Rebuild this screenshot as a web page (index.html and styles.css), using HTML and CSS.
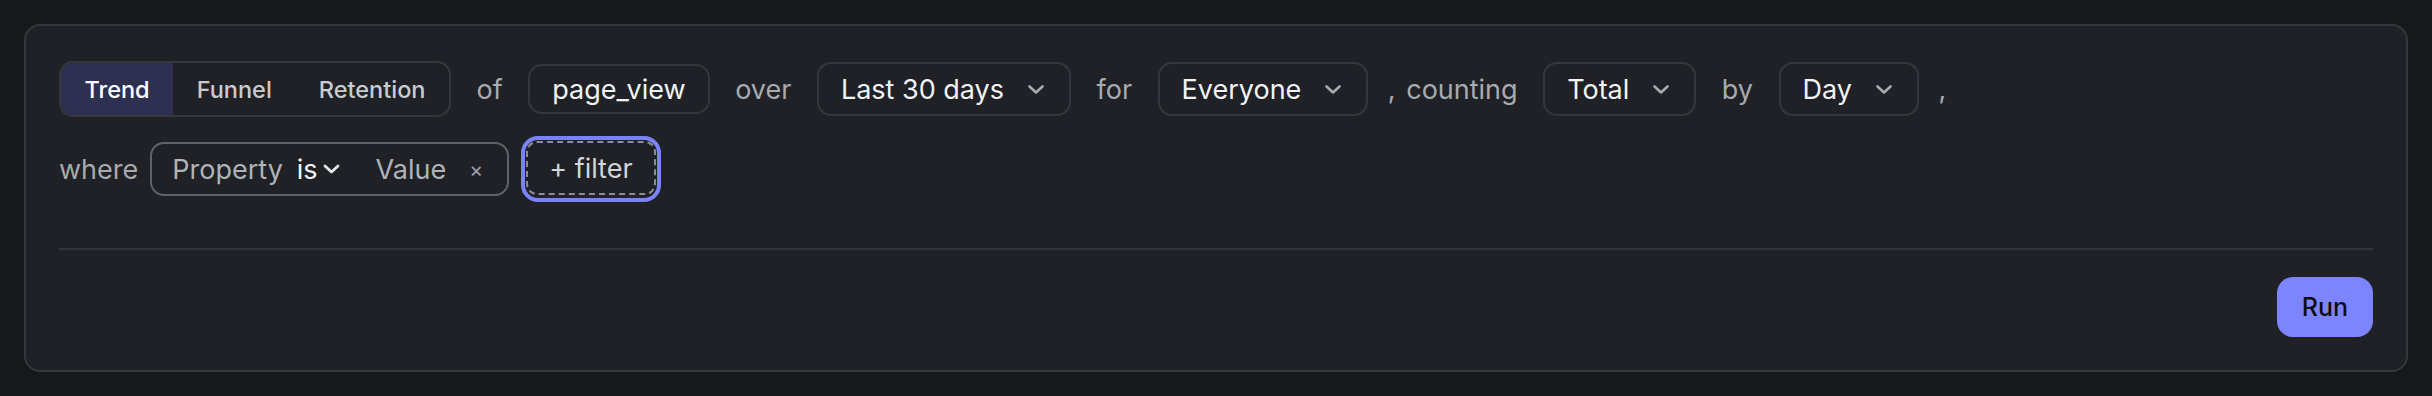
FILE: index.html
```html
<!DOCTYPE html>
<html lang="en">
<head>
<meta charset="utf-8">
<title>Query builder</title>
<link rel="stylesheet" href="styles.css">
</head>
<body>
<div class="card">
  <div class="rows">
    <div class="row row-main">
      <div class="segmented">
        <button class="seg seg-active">Trend</button>
        <button class="seg">Funnel</button>
        <button class="seg">Retention</button>
      </div>
      <span class="label">of</span>
      <span class="chip">page_view</span>
      <span class="label">over</span>
      <button class="dropdown"><span>Last 30 days</span><svg class="chev" width="18" height="11" viewBox="0 0 18 11"><path d="M2.5 2.5l6.5 6 6.5-6"/></svg></button>
      <span class="label">for</span>
      <button class="dropdown"><span>Everyone</span><svg class="chev" width="18" height="11" viewBox="0 0 18 11"><path d="M2.5 2.5l6.5 6 6.5-6"/></svg></button>
      <span class="label label-comma">, counting</span>
      <button class="dropdown"><span>Total</span><svg class="chev" width="18" height="11" viewBox="0 0 18 11"><path d="M2.5 2.5l6.5 6 6.5-6"/></svg></button>
      <span class="label">by</span>
      <button class="dropdown"><span>Day</span><svg class="chev" width="18" height="11" viewBox="0 0 18 11"><path d="M2.5 2.5l6.5 6 6.5-6"/></svg></button>
      <span class="label label-comma">,</span>
    </div>
    <div class="row row-where">
      <span class="label">where</span>
      <div class="filter-pill">
        <span class="fp-prop">Property</span>
        <span class="fp-op">is<svg class="chev-op" width="17" height="10" viewBox="0 0 17 10"><path d="M2 2l6.5 6 6.5-6"/></svg></span>
        <span class="fp-value">Value</span>
        <span class="fp-remove">×</span>
      </div>
      <div class="focus-ring"><button class="add-filter">+ filter</button></div>
    </div>
  </div>
  <div class="divider"></div>
  <div class="footer">
    <button class="run">Run</button>
  </div>
</div>
</body>
</html>
```

FILE: styles.css
```css
* { box-sizing: border-box; }

html, body {
  margin: 0;
  background: #16181c;
}

body {
  padding: 24px;
  font-family: Inter, "Noto Sans", "DejaVu Sans", sans-serif;
  color: #f0f1f3;
}

button {
  font-family: inherit;
  margin: 0;
  background: none;
  color: inherit;
  cursor: pointer;
}

.card {
  display: flex;
  flex-direction: column;
  height: 348px;
  background: #1f2126;
  border: 2px solid #34373c;
  border-radius: 16px;
  padding: 35px 33px 33px;
}

.rows {
  display: flex;
  flex-direction: column;
  gap: 19px;
}

.row {
  display: flex;
  align-items: center;
}

.row-main {
  gap: 25.5px;
  height: 56px;
}

.row-where {
  gap: 12px;
  height: 66px;
}

.label {
  font-size: 27px;
  color: #a7aaaf;
  white-space: nowrap;
}

.label-comma {
  margin-left: -6px;
  word-spacing: 3px;
}

/* segmented control */
.segmented {
  display: flex;
  height: 56px;
  border: 2px solid #34373c;
  border-radius: 14px;
  overflow: hidden;
}

.seg {
  border: 0;
  padding: 0 23.5px;
  font-size: 23.5px;
  font-weight: 500;
  color: #c8cbcf;
}

.seg-active {
  background: #2d3050;
  color: #ffffff;
}

/* plain chip */
.chip {
  display: flex;
  align-items: center;
  height: 50px;
  padding: 0 22px;
  border: 2px solid #34373c;
  border-radius: 14px;
  font-size: 27px;
  color: #f2f3f5;
}

/* dropdowns */
.dropdown {
  display: flex;
  align-items: center;
  gap: 23px;
  height: 54px;
  padding: 0 24px 0 22px;
  border: 2px solid #34373c;
  border-radius: 14px;
  font-size: 27px;
  color: #f2f3f5;
  white-space: nowrap;
}

.chev path {
  fill: none;
  stroke: #a9acb1;
  stroke-width: 2.6;
  stroke-linecap: round;
  stroke-linejoin: round;
}

/* filter pill */
.filter-pill {
  display: flex;
  align-items: center;
  height: 54px;
  padding: 0 24px 0 20px;
  border: 2px solid #5f6267;
  border-radius: 14px;
  font-size: 27px;
  color: #b0b3b7;
}

.fp-op {
  display: flex;
  align-items: center;
  gap: 5px;
  margin-left: 14px;
  color: #f2f3f5;
}

.chev-op path {
  fill: none;
  stroke: #e8e9eb;
  stroke-width: 2.8;
  stroke-linecap: round;
  stroke-linejoin: round;
}

.fp-value {
  margin-left: 36px;
}

.fp-remove {
  margin-left: 23px;
  font-size: 21px;
  color: #9c9fa4;
}

/* add filter (focused) */
.focus-ring {
  display: flex;
  height: 66px;
  padding: 1px;
  border: 4px solid #7b83fb;
  border-radius: 17px;
}

.add-filter {
  height: 54px;
  padding: 0 21px;
  border: 2px dashed #8a8d92;
  border-radius: 11px;
  font-size: 27px;
  color: #d3d5d8;
}

.divider {
  flex: none;
  margin-top: 46px;
  height: 2px;
  background: #313439;
}

.footer {
  display: flex;
  justify-content: flex-end;
  margin-top: 27px;
}

.run {
  height: 60px;
  padding: 0 25px;
  border: 0;
  border-radius: 16px;
  background: #7c85ff;
  color: #0d0e12;
  font-size: 25px;
  font-weight: 500;
}
```
